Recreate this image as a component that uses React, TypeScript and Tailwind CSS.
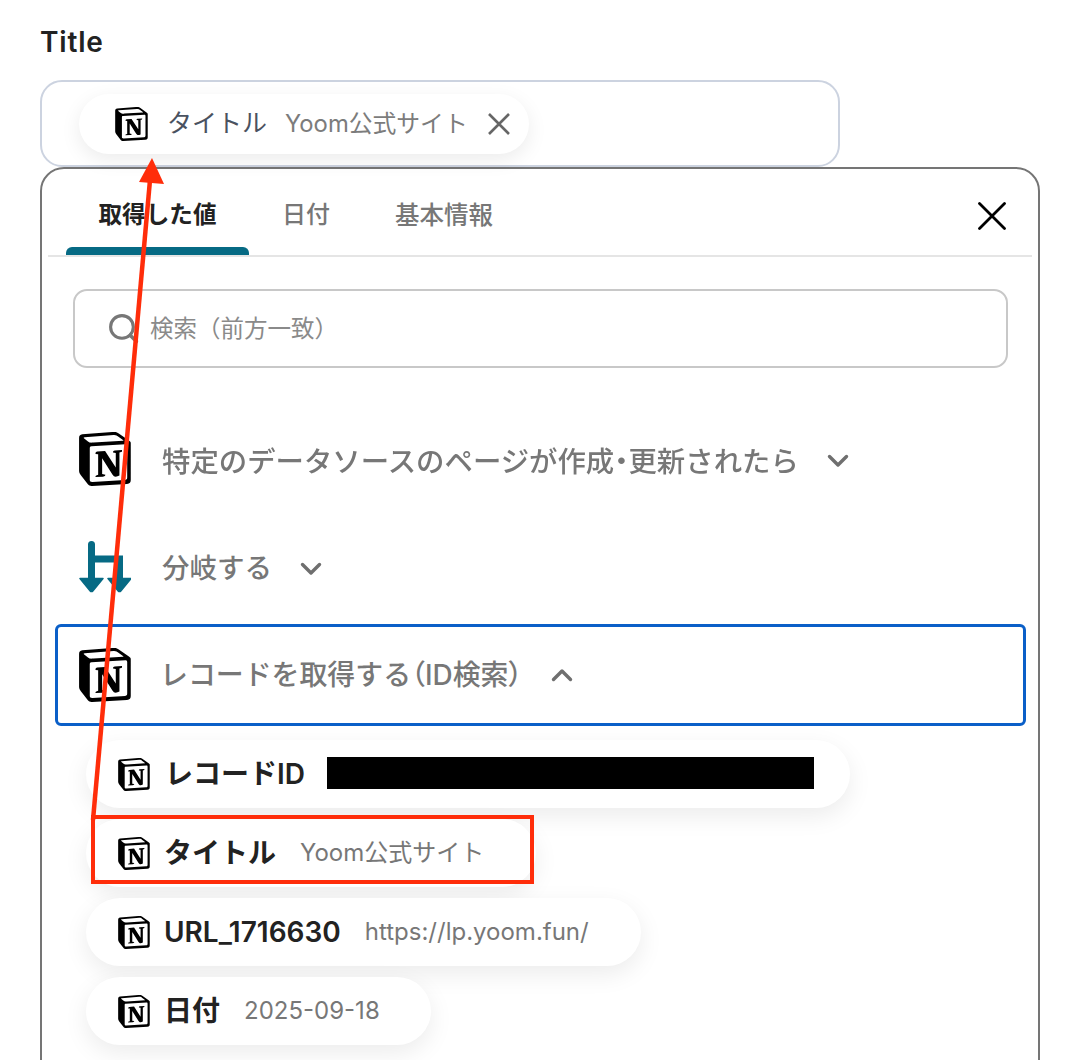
import React from "react";

const WHITE = "M6.017 4.313l55.333 -4.087c6.797 -0.583 8.543 -0.19 12.817 2.917l17.663 12.443c2.913 2.14 3.883 2.723 3.883 5.053v68.243c0 4.277 -1.553 6.807 -6.99 7.193L24.467 99.967c-4.08 0.193 -6.023 -0.39 -8.16 -3.113L3.3 79.94c-2.333 -3.113 -3.3 -5.443 -3.3 -8.167V11.113c0 -3.497 1.553 -6.413 6.017 -6.8z";
const BLACK = "M61.35 0.227l-55.333 4.087C1.553 4.7 0 7.617 0 11.113v60.66c0 2.723 0.967 5.053 3.3 8.167l13.007 16.913c2.137 2.723 4.08 3.307 8.16 3.113l64.257 -3.89c5.433 -0.387 6.99 -2.917 6.99 -7.193V20.64c0 -2.21 -0.873 -2.847 -3.443 -4.733L74.167 3.143c-4.273 -3.107 -6.02 -3.5 -12.817 -2.917zM25.92 19.523c-5.247 0.353 -6.437 0.433 -9.417 -1.99L8.927 11.507c-0.77 -0.78 -0.383 -1.753 1.557 -1.947l53.193 -3.887c4.467 -0.39 6.793 1.167 8.54 2.527l9.123 6.61c0.39 0.197 1.36 1.36 0.193 1.36l-54.933 3.307 -0.68 0.047zM19.803 88.3V30.367c0 -2.53 0.777 -3.697 3.103 -3.893L86 22.78c2.14 -0.193 3.107 1.167 3.107 3.693v57.547c0 2.53 -0.39 4.67 -3.883 4.863l-60.377 3.5c-3.493 0.193 -5.043 -0.97 -5.043 -4.083zm59.6 -54.827c0.387 1.75 0 3.5 -1.75 3.7l-2.91 0.577v42.773c-2.527 1.36 -4.853 2.137 -6.797 2.137 -3.107 0 -3.883 -0.973 -6.21 -3.887l-19.03 -29.94v28.967l6.02 1.363s0 3.5 -4.857 3.5l-13.39 0.777c-0.39 -0.78 0 -2.723 1.357 -3.11l3.497 -0.97v-38.3L30.48 40.667c-0.39 -1.75 0.58 -4.277 3.3 -4.473l14.367 -0.967 19.8 30.327v-26.83l-5.047 -0.58c-0.39 -2.143 1.163 -3.7 3.103 -3.89l13.4 -0.78z";

function Notion({ className }: { className: string }) {
  return (
    <svg viewBox="0 0 96 100" className={className}>
      <path d={WHITE} fill="#fff" />
      <path d={BLACK} fill="#000" fillRule="evenodd" />
    </svg>
  );
}

function Branch() {
  return (
    <svg viewBox="0 0 52 54" className="h-[54px] w-[52px] shrink-0" fill="none">
      <path d="M12.5 3.5v36M12.5 18h28v21" stroke="#066a84" strokeWidth="7" strokeLinecap="round" />
      <path d="M1 37.5h23L13.8 50a1.7 1.7 0 0 1-2.6 0z" fill="#066a84" stroke="#066a84" strokeWidth="1.5" strokeLinejoin="round" />
      <path d="M29 37.5h23L41.8 50a1.7 1.7 0 0 1-2.6 0z" fill="#066a84" stroke="#066a84" strokeWidth="1.5" strokeLinejoin="round" />
    </svg>
  );
}

function Chevron({ up }: { up?: boolean }) {
  return (
    <svg viewBox="0 0 22 14" className="h-[14px] w-[22px]" fill="none">
      <path d={up ? "M2.5 11.5 11 3l8.5 8.5" : "M2.5 2.5 11 11l8.5-8.5"} stroke="#6f6f6f" strokeWidth="3.4" strokeLinecap="round" strokeLinejoin="round" />
    </svg>
  );
}

function Chip({ label, value, pr }: { label: string; value: string; pr: string }) {
  return (
    <div className={`flex h-[68px] w-fit items-center rounded-[34px] bg-white pl-[32px] shadow-[0_8px_24px_rgba(0,0,0,0.08)] ${pr}`}>
      <Notion className="h-[33px] w-[32px] shrink-0" />
      <span className="ml-[14px] text-[28px] font-semibold leading-none text-[#222222]">{label}</span>
      <span className="ml-[24px] text-[24px] leading-none text-[#777777]">{value}</span>
    </div>
  );
}

export default function App() {
  return (
    <div className="relative h-[1060px] w-[1080px] overflow-hidden bg-white pl-[40px] pt-[26px] font-['Inter','Noto_Sans_CJK_JP',sans-serif]">
      <div className="text-[28px] font-semibold leading-[32px] tracking-[0.8px] text-[#222222]">Title</div>

      <div className="mt-[22px] flex h-[87px] w-[800px] items-center rounded-[22px] border-2 border-[#ccd3e0] pl-[37px]">
        <div className="flex h-[60px] w-[450px] items-center rounded-[30px] bg-white pl-[36px] shadow-[0_6px_20px_rgba(0,0,0,0.08)]">
          <Notion className="h-[34px] w-[33px] shrink-0" />
          <span className="ml-[19px] text-[25px] leading-none text-[#4a5260]">タイトル</span>
          <span className="ml-[18px] text-[23.8px] leading-none text-[#7c7c7c]">Yoom公式サイト</span>
          <svg viewBox="0 0 24 24" className="ml-[19px] h-[24px] w-[24px]" fill="none">
            <path d="M2 2l20 20M22 2 2 22" stroke="#666" strokeWidth="2.6" />
          </svg>
        </div>
      </div>

      <div className="h-[920px] w-[1000px] rounded-t-[24px] border-2 border-[#757575] px-[6px]">
        <div className="relative flex h-[88px] border-b-2 border-[#e5e5e5]">
          <div className="flex w-[201px] flex-col items-center">
            <span className="ml-[18px] mt-[34px] text-[23.6px] font-semibold leading-none text-[#222222]">取得した値</span>
          </div>
          <span className="ml-[33px] mt-[34px] text-[24px] font-medium leading-none text-[#777777]">日付</span>
          <span className="ml-[65px] mt-[34px] text-[24.5px] font-medium leading-none text-[#777777]">基本情報</span>
          <div className="absolute bottom-0 left-[18px] h-[8px] w-[183px] rounded-t-[6px] bg-[#066a84]" />
          <svg viewBox="0 0 28 28" className="absolute right-[26px] top-[33px] h-[28px] w-[28px]" fill="none">
            <path d="M1.5 1.5l25 25M26.5 1.5l-25 25" stroke="#000" strokeWidth="2.8" strokeLinecap="round" />
          </svg>
        </div>

        <div className="ml-[25px] mt-[32px] flex h-[79px] w-[935px] items-center rounded-[14px] border-2 border-[#c8c8c8] pl-[32px]">
          <svg viewBox="0 0 32 32" className="h-[33px] w-[33px]" fill="none">
            <circle cx="14.5" cy="14.5" r="11" stroke="#777" strokeWidth="3" />
            <path d="M22.5 22.5l6 6" stroke="#777" strokeWidth="3.4" strokeLinecap="round" />
          </svg>
          <span className="ml-[10px] text-[23.5px] leading-none text-[#8a8a8a]">検索（前方一致）</span>
        </div>

        <div className="ml-[31px] mt-[64px] flex items-center">
          <div className="w-[83px] shrink-0"><Notion className="h-[54px] w-[52px]" /></div>
          <span className="pt-[6px] text-[28.4px] font-medium leading-none text-[#777777] blur-[0.6px]">
            特定のデータソースのページが作成<span className="[font-feature-settings:'palt']">・</span>更新されたら
          </span>
          <span className="ml-[28px] pt-[4px]"><Chevron /></span>
        </div>

        <div className="ml-[31px] mt-[55px] flex items-center">
          <div className="w-[83px] shrink-0"><Branch /></div>
          <span className="pt-[2px] text-[27.5px] font-medium leading-none text-[#777777]">分岐する</span>
          <span className="ml-[28px] pt-[2px]"><Chevron /></span>
        </div>

        <div className="ml-[7px] mt-[29px] flex h-[102px] w-[971px] items-center rounded-[6px] border-[3px] border-[#0a5fc8] pl-[21px]">
          <div className="w-[81px] shrink-0"><Notion className="h-[54px] w-[52px]" /></div>
          <span className="pt-[2px] text-[27.9px] font-medium leading-none text-[#777777]">
            レコードを取得する<span className="[font-feature-settings:'palt']">（</span>ID検索<span className="[font-feature-settings:'palt']">）</span>
          </span>
          <span className="ml-[29px]"><Chevron up /></span>
        </div>

        <div className="ml-[38px] mt-[14px] flex flex-col gap-[11px]">
          <div className="flex h-[68px] w-[764px] items-center rounded-[34px] bg-white pl-[32px] shadow-[0_8px_24px_rgba(0,0,0,0.08)]">
            <Notion className="h-[33px] w-[32px] shrink-0" />
            <span className="ml-[15px] text-[28px] font-semibold leading-none text-[#222222]">レコードID</span>
            <div className="ml-[22px] mb-[2px] h-[32px] w-[487px] bg-black" />
          </div>
          <Chip label="タイトル" value="Yoom公式サイト" pr="pr-[52px]" />
          <Chip label="URL_1716630" value="https://lp.yoom.fun/" pr="pr-[52px]" />
          <Chip label="日付" value="2025-09-18" pr="pr-[51px]" />
        </div>
      </div>

      <div className="absolute left-[91px] top-[815px] h-[69px] w-[443px] border-[4px] border-[#ff2d0a]" />
      <svg viewBox="0 0 1080 1060" className="pointer-events-none absolute left-0 top-0 h-[1060px] w-[1080px]">
        <path d="M93 820 150 180" stroke="#ff2d0a" strokeWidth="4.5" fill="none" />
        <path d="M152 158 164 184 139 182z" fill="#ff2d0a" />
      </svg>
    </div>
  );
}
